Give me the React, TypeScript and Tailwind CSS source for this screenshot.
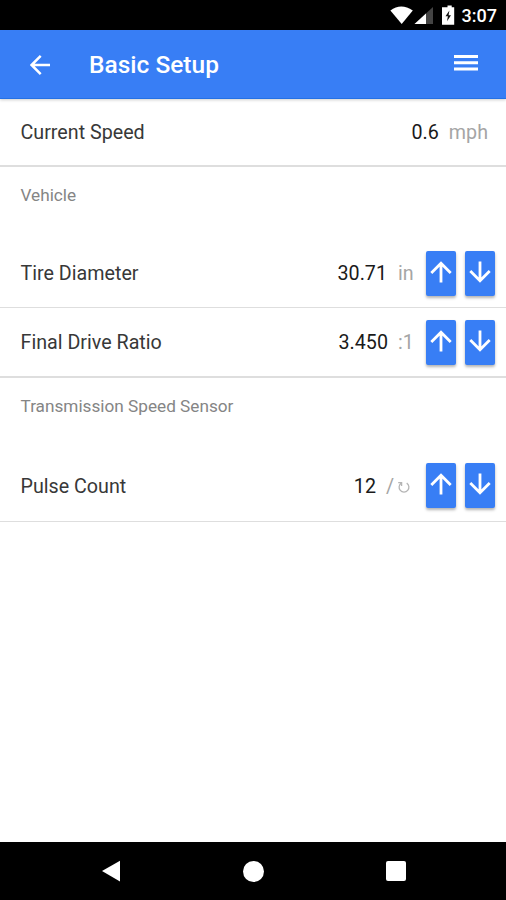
import type { ReactNode } from "react";
import { clsx } from "clsx";

type Direction = "up" | "down";

function StepButton({ direction }: { direction: Direction }) {
  return (
    <button
      type="button"
      aria-label={direction === "up" ? "Increase" : "Decrease"}
      className="flex h-[45px] w-[30px] items-center justify-center rounded-[2px] bg-[#387ef5] pb-[3px] shadow-[0_2px_3px_rgba(0,0,0,0.3)]"
    >
      <svg
        viewBox="0 0 22 22"
        className={clsx("h-[22px] w-[22px]", direction === "down" && "rotate-180")}
        fill="none"
        stroke="#fff"
        strokeWidth="2.8"
      >
        <path d="M11 21.5V2.3M1.3 11.9 11 2.2l9.7 9.7" />
      </svg>
    </button>
  );
}

function SettingRow({
  label,
  value,
  unit,
  unitClass,
  className,
}: {
  label: string;
  value: string;
  unit: ReactNode;
  unitClass: string;
  className: string;
}) {
  return (
    <div
      className={clsx(
        "flex items-center border-b border-[#dedede] pr-[11px] pl-[20.5px] text-[19.7px] leading-[30px] text-[#383838]",
        className,
      )}
    >
      <span className="flex-1 pt-px">{label}</span>
      <span className="pt-px text-[#1a1a1a]">{value}</span>
      <span className={clsx("flex shrink-0 items-center pt-px text-[#a5a5a5]", unitClass)}>
        {unit}
      </span>
      <div className="flex gap-[9px]">
        <StepButton direction="up" />
        <StepButton direction="down" />
      </div>
    </div>
  );
}

function SectionTitle({ children, className }: { children: ReactNode; className: string }) {
  return (
    <h2 className={clsx("pl-[20.5px] text-[17.2px] leading-6 text-[#858585]", className)}>
      {children}
    </h2>
  );
}

function StatusBar() {
  return (
    <div className="flex h-[30px] items-center justify-end bg-black pr-[9px] text-white">
      <svg className="h-[30px] w-[72px]" viewBox="0 0 72 30">
        <path d="M0.4 10.4Q11 2.6 22.8 10.4L11.7 24Z" fill="#fff" />
        <path d="M43 7V24H24.5Z" fill="#444" />
        <path d="M36 13.4V24H24.5Z" fill="#fff" />
        <path
          d="M54.7 7.2h2.8V5.6h4.2v1.6h2.5v17.6H52V7.2Z"
          fill="#fff"
        />
        <path d="m59.4 10.5-3.9 5.7h2.4L57 21.3l4-6.1h-2.4Z" fill="#111" />
      </svg>
      <span className="pt-[2px] text-[18px] leading-[28px] font-medium">3:07</span>
    </div>
  );
}

function Header() {
  return (
    <header className="relative z-10 flex h-[69px] items-center border-b border-[#2471e5] bg-[#387ef5] pr-7 pl-[30px] shadow-[0_1px_3px_rgba(0,0,0,0.2)]">
      <svg className="mt-px h-5 w-5" viewBox="0 0 20 20" fill="none" stroke="#fff" strokeWidth="2.5">
        <path d="M20 10H2M10.7 .9 1.6 10l9.1 9.1" />
      </svg>
      <h1 className="mt-[2px] ml-[39px] flex-1 text-[24.5px] font-medium text-white">Basic Setup</h1>
      <svg className="mb-[2px] h-[18px] w-6" viewBox="0 0 24 18" fill="#fff">
        <path d="M0 1h24v3H0zM0 7.3h24v3H0zM0 13.6h24v3H0z" />
      </svg>
    </header>
  );
}

function NavBar() {
  return (
    <nav className="flex h-[58px] items-center justify-between bg-black pr-[100px] pl-[101px]">
      <svg className="h-[22px] w-[19px]" viewBox="0 0 19 22">
        <path d="M19 .7v20.8L1 11.1Z" fill="#fff" />
      </svg>
      <div className="h-[21px] w-[21px] rounded-full bg-white" />
      <div className="h-5 w-5 rounded-[2px] bg-white" />
    </nav>
  );
}

export default function App() {
  return (
    <div className="flex h-[900px] w-[506px] flex-col overflow-hidden bg-white font-[Roboto,sans-serif]">
      <StatusBar />
      <Header />
      <main className="flex-1">
        <div className="flex h-[68px] items-center border-b-2 border-[#dedede] pt-[2px] pr-[18px] pl-[20.5px] text-[19.7px] leading-[30px] text-[#383838]">
          <span className="flex-1">Current Speed</span>
          <span className="text-[#1a1a1a]">0.6</span>
          <span className="ml-[10px] text-[#a5a5a5]">mph</span>
        </div>

        <SectionTitle className="h-[73px] pt-4">Vehicle</SectionTitle>
        <SettingRow
          label="Tire Diameter"
          value="30.71"
          unit="in"
          unitClass="ml-[11px] w-7"
          className="h-[68px]"
        />
        <SettingRow
          label="Final Drive Ratio"
          value="3.450"
          unit=":1"
          unitClass="ml-[10px] w-7"
          className="h-[70px] border-b-2"
        />

        <SectionTitle className="h-[72px] pt-4">Transmission Speed Sensor</SectionTitle>
        <SettingRow
          label="Pulse Count"
          value="12"
          unit={
            <>
              /
              <svg
                className="ml-[3px] h-[14px] w-[14px]"
                viewBox="0 0 14 14"
                fill="none"
                stroke="#b5b5b5"
                strokeWidth="1.3"
              >
                <path d="M4.3 3.1A4.9 4.9 0 1 0 9.7 3.1M1.2 2.7h3.4v3.2" />
              </svg>
            </>
          }
          unitClass="ml-[10px] w-10"
          className="h-[72px] [&>span]:pt-[3px]"
        />
      </main>
      <NavBar />
    </div>
  );
}
